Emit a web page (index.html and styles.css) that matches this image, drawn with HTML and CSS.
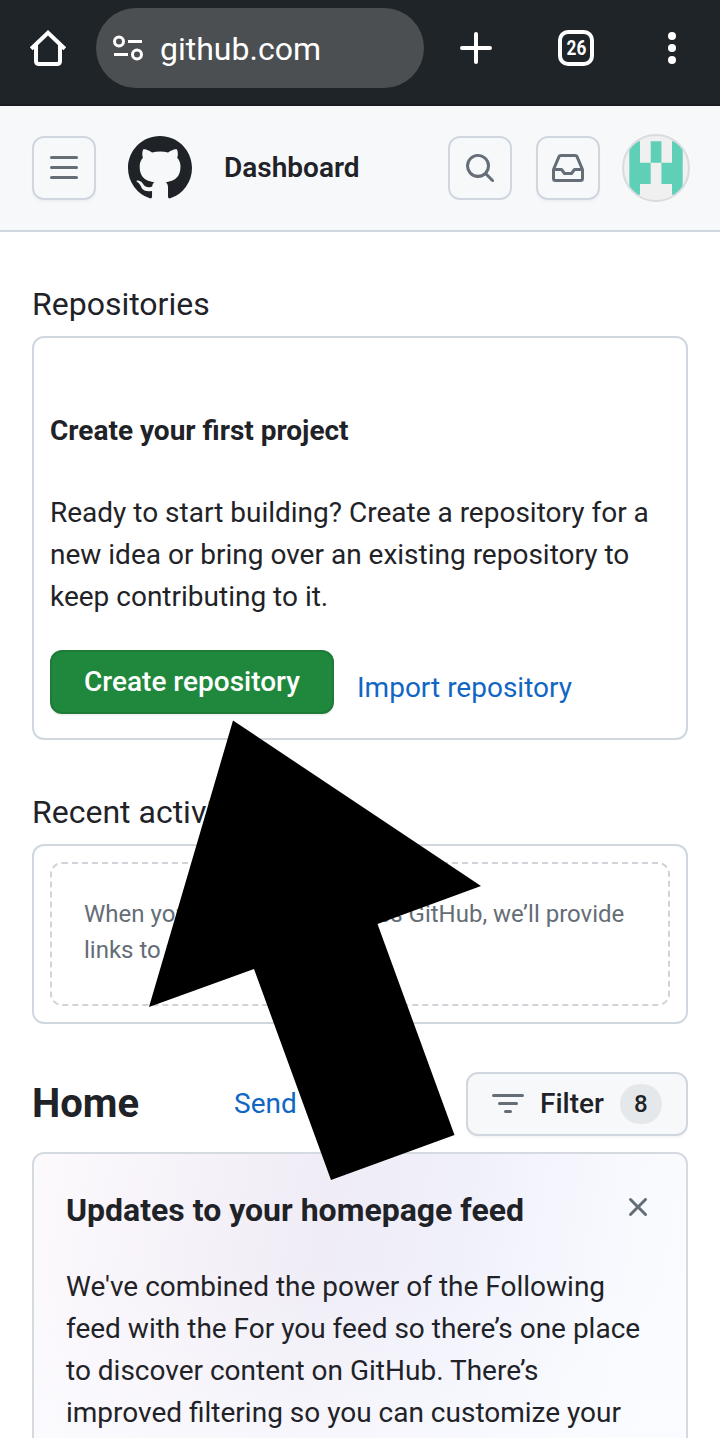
FILE: index.html
```html
<!DOCTYPE html>
<html lang="en">
<head>
<meta charset="utf-8">
<title>Dashboard</title>
<link rel="stylesheet" href="styles.css">
</head>
<body>
<div class="browser">
  <svg class="home-icon" width="40" height="40" viewBox="0 0 40 40" fill="none" stroke="#fff" stroke-width="4"><path d="M3.200 20.800 20 4.800l16.800 16"/><path d="M8 16v17q0 3 3 3h18q3 0 3-3V16"/></svg>
  <div class="omnibox">
    <svg width="32" height="26" viewBox="0 0 32 26" fill="none" stroke="#fff" stroke-width="3"><circle cx="7" cy="6.500" r="4.500"/><path d="M16 6.500h14M2 19.500h14"/><circle cx="25" cy="19.500" r="4.500"/></svg>
    <span>github.com</span>
  </div>
  <svg class="plus" width="32" height="32" viewBox="0 0 32 32" stroke="#fff" stroke-width="4" stroke-linecap="round"><path d="M2 16h28M16 2v28"/></svg>
  <div class="tabs"><span>26</span></div>
  <svg class="dots" width="8" height="32" viewBox="0 0 8 32" fill="#fff"><circle cx="4" cy="4" r="4"/><circle cx="4" cy="16" r="4"/><circle cx="4" cy="28" r="4"/></svg>
</div>

<header class="header">
  <button class="icon-btn"><svg width="32" height="32" viewBox="0 0 32 32" stroke="#656d76" stroke-width="3" stroke-linecap="round"><path d="M3.500 5.500h25M3.500 15.500h25M3.500 25.500h25"/></svg></button>
  <svg class="logo" width="64" height="64" viewBox="0 0 16 16" fill="#1f2328"><path d="M8 0c4.420 0 8 3.580 8 8a8.013 8.013 0 0 1-5.450 7.590c-.4.08-.55-.17-.55-.38 0-.27.01-1.130.01-2.200 0-.75-.25-1.230-.54-1.480 1.780-.2 3.650-.88 3.650-3.950 0-.88-.31-1.590-.82-2.150.08-.2.36-1.020-.08-2.120 0 0-.67-.22-2.200.82-.64-.18-1.320-.27-2-.27-.68 0-1.360.09-2 .27-1.530-1.030-2.200-.82-2.200-.82-.44 1.100-.16 1.920-.08 2.120-.51.56-.82 1.280-.82 2.150 0 3.060 1.860 3.750 3.640 3.950-.23.2-.44.55-.51 1.070-.46.21-1.610.55-2.330-.66-.15-.24-.6-.83-1.230-.82-.67.01-.27.38.01.53.34.19.73.9.82 1.130.16.45.68 1.310 2.690.94 0 .67.01 1.300.01 1.490 0 .21-.15.45-.55.38A7.995 7.995 0 0 1 0 8c0-4.420 3.580-8 8-8Z"/></svg>
  <span class="title">Dashboard</span>
  <button class="icon-btn search"><svg width="32" height="32" viewBox="0 0 16 16" fill="#656d76"><path d="M10.680 11.740a6 6 0 0 1-7.922-8.982 6 6 0 0 1 8.982 7.922l3.040 3.040a.749.749 0 0 1-.326 1.275.749.749 0 0 1-.734-.215ZM11.500 7a4.499 4.499 0 1 0-8.997 0A4.499 4.499 0 0 0 11.500 7Z"/></svg></button>
  <button class="icon-btn inbox"><svg width="32" height="32" viewBox="0 0 16 16" fill="#656d76"><path d="M2.800 2.060A1.750 1.750 0 0 1 4.410 1h7.180c.7 0 1.333.417 1.610 1.060l2.740 6.395c.04.093.06.194.06.295v4.500A1.750 1.750 0 0 1 14.250 15H1.750A1.750 1.750 0 0 1 0 13.250v-4.500c0-.101.02-.202.06-.295Zm1.610.44a.25.25 0 0 0-.23.152L1.887 8H4.750a.75.75 0 0 1 .6.3L6.625 10h2.750l1.275-1.700a.75.75 0 0 1 .6-.3h2.863L11.820 2.652a.25.25 0 0 0-.23-.152Zm10.090 7h-2.875l-1.275 1.700a.75.75 0 0 1-.6.3h-3.500a.75.75 0 0 1-.6-.3L4.375 9.500H1.500v3.750c0 .138.112.25.25.25h12.500a.25.25 0 0 0 .25-.25Z"/></svg></button>
  <svg class="avatar" width="68" height="68" viewBox="0 0 68 68"><defs><clipPath id="round"><circle cx="34" cy="34" r="33"/></clipPath></defs><circle cx="34" cy="34" r="33" fill="#f0f0f0"/><path clip-path="url(#round)" fill="#5fd0b7" d="M7.300 7.300h10.700v21.500h10.700V7.300h10.700v21.500H50V7.300h10.700v53.500H50V50H39.400V28.800H28.700V50H18v10.800H7.300z"/><circle cx="34" cy="34" r="33" fill="none" stroke="#d9dcdf" stroke-width="2"/></svg>
</header>

<main class="content">
  <h2 class="section">Repositories</h2>
  <section class="card repos">
    <h3>Create your first project</h3>
    <p>Ready to start building? Create a repository for a<br>new idea or bring over an existing repository to<br>keep contributing to it.</p>
    <div class="actions">
      <button class="create">Create repository</button>
      <a class="link">Import repository</a>
    </div>
  </section>

  <h2 class="section recent">Recent activity</h2>
  <section class="card activity">
    <svg class="dash" width="620" height="144" viewBox="0 0 620 144" fill="none" stroke="#d0d3d7" stroke-width="2" stroke-dasharray="6 4"><rect x="1" y="1" width="618" height="142" rx="11"/></svg>
    <p>When you take actions across GitHub, we’ll provide links to that activity here.</p>
  </section>

  <div class="home-row">
    <h1>Home</h1>
    <a class="link">Send feedback</a>
    <button class="filter">
      <svg width="32" height="20" viewBox="0 0 32 20" stroke="#656d76" stroke-width="3" stroke-linecap="round"><path d="M1.500 1.500h29M7.500 9.500h17M13.500 17.500h5"/></svg>
      <span>Filter</span>
      <span class="count">8</span>
    </button>
  </div>

  <section class="card feed">
    <div class="feed-head">
      <h2>Updates to your homepage feed</h2>
      <svg width="32" height="32" viewBox="0 0 16 16" fill="#656d76"><path d="M3.720 3.720a.75.75 0 0 1 1.060 0L8 6.940l3.220-3.220a.749.749 0 0 1 1.275.326.749.749 0 0 1-.215.734L9.060 8l3.220 3.220a.749.749 0 0 1-.326 1.275.749.749 0 0 1-.734-.215L8 9.060l-3.220 3.220a.751.751 0 0 1-1.042-.018.751.751 0 0 1-.018-1.042L6.940 8 3.720 4.780a.75.75 0 0 1 0-1.060Z"/></svg>
    </div>
    <p>We've combined the power of the Following<br>feed with the For you feed so there’s one place<br>to discover content on GitHub. There’s<br>improved filtering so you can customize your</p>
  </section>
</main>

<svg class="pointer" width="332" height="460" viewBox="149 720 332 460"><path d="M233 720.500 481 886 377.500 924 454.500 1135 331 1180 254 969 149 1007Z"/></svg>
</body>
</html>
```
FILE: styles.css
```css
* { box-sizing: border-box; }
body {
  margin: 0;
  position: relative;
  height: 1438px;
  overflow: hidden;
  background: #fff;
  color: #1f2328;
  font: 28px/42px Roboto, sans-serif;
}
h1, h2, h3, p { margin: 0; }
button { font: inherit; color: inherit; padding: 0; margin: 0; }
svg { display: block; flex: none; }

.browser {
  display: flex;
  align-items: center;
  height: 106px;
  padding: 0 44px 8px 28px;
  background: #1f2428;
  border-bottom: 2px solid #1b1c21;
}
.omnibox {
  display: flex;
  align-items: center;
  gap: 16px;
  width: 328px;
  height: 80px;
  margin-left: 28px;
  padding-left: 16px;
  border-radius: 40px;
  background: #4c4f51;
  color: #fff;
  font-size: 32px;
}
.omnibox span { padding-top: 2px; }
.plus { margin-left: 36px; }
.tabs {
  display: flex;
  align-items: center;
  justify-content: center;
  width: 36px;
  height: 36px;
  margin-left: 66px;
  border: 4px solid #fff;
  border-radius: 10px;
  color: #fff;
  font-size: 20px;
  font-weight: 700;
  line-height: 28px;
}
.tabs span { transform: scaleX(.86); }
.dots { margin-left: 74px; }

.header {
  display: flex;
  align-items: center;
  height: 126px;
  padding: 0 30px 0 32px;
  background: #f6f8fa;
  border-bottom: 2px solid #d0d7de;
}
.icon-btn {
  display: grid;
  place-items: center;
  width: 64px;
  height: 64px;
  border: 2px solid #d0d7de;
  border-radius: 12px;
  background: #f6f8fa;
  box-shadow: 0 2px 2px rgba(31, 35, 40, .04);
}
.search { box-shadow: none; }
.logo { margin-left: 32px; }
.title { margin-left: 32px; font-weight: 600; }
.search { margin-left: auto; }
.inbox { margin-left: 24px; }
.avatar { margin-left: 22px; }

.content { padding: 48px 32px 0; }
.section { font-size: 32px; font-weight: 400; line-height: 48px; }
.card { border: 2px solid #d0d7de; border-radius: 12px; }
.repos { height: 404px; margin-top: 8px; padding: 72px 16px 0; }
.repos h3 { font-size: 28px; font-weight: 700; }
.repos p { margin-top: 40px; }
.actions { display: flex; gap: 23px; margin-top: 32px; }
.create {
  width: 284px;
  height: 64px;
  border: 2px solid #1e7a37;
  border-radius: 12px;
  background: #1f883d;
  color: #fff;
  font-weight: 500;
  line-height: 58px;
  box-shadow: 0 2px 0 rgba(31, 35, 40, .06);
}
.link { color: #0969da; color: #1166c4; }
.actions .link { padding-top: 17px; }
.recent { margin-top: 48px; }
.activity { position: relative; height: 180px; margin-top: 8px; padding: 50px 50px 0; color: #656d76; font-size: 24px; line-height: 36px; }
.dash { position: absolute; left: 16px; top: 16px; }

.home-row { display: flex; align-items: center; height: 64px; margin-top: 48px; }
.home-row h1 { width: 202px; font-size: 40px; font-weight: 700; line-height: 60px; }
.filter {
  display: flex;
  align-items: center;
  width: 222px;
  height: 64px;
  margin-left: auto;
  padding-left: 24px;
  border: 2px solid #d0d7de;
  border-radius: 12px;
  background: #f6f8fa;
  font-weight: 500;
  box-shadow: 0 2px 0 rgba(31, 35, 40, .04);
}
.filter svg { margin-right: 16px; }
.count {
  width: 42px;
  height: 40px;
  margin-left: 16px;
  border-radius: 20px;
  background: #e5e8ea;
  font-size: 24px;
  line-height: 40px;
  text-align: center;
}
.feed {
  height: 320px;
  margin-top: 16px;
  padding: 32px;
  border-color: #d5dae1;
  background:
    linear-gradient(180deg, rgba(251, 252, 255, 0) 35%, rgba(251, 252, 255, .75) 100%),
    linear-gradient(100deg, #fdfafd 0%, #f6f2f9 22%, #efecf6 43%, #f0f0fb 62%, #f7f9fe 84%, #fafcff 100%);
}
.feed-head { display: flex; justify-content: space-between; }
.feed-head h2 { font-size: 32px; font-weight: 700; line-height: 48px; }
.feed-head svg { margin-top: 5px; }
.feed p { margin-top: 32px; white-space: nowrap; }
.pointer { position: absolute; left: 149px; top: 720px; }
```
